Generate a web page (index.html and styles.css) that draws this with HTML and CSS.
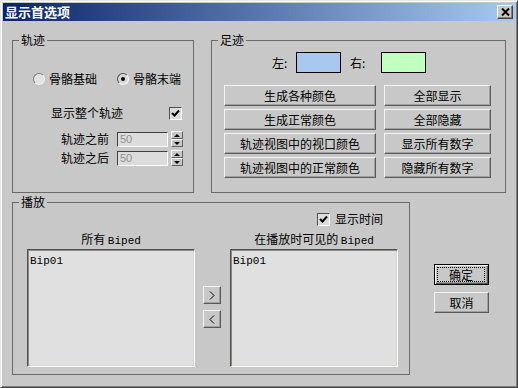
FILE: index.html
```html
<!DOCTYPE html>
<html>
  <head>
    <meta charset="utf-8">
    <title>显示首选项</title>
    <link rel="stylesheet" href="styles.css">
  </head>
  <body>
    <div class="window">
      <div class="titlebar">
        <span class="title">显示首选项</span>
        <span class="close-btn">
          <svg width="9" height="8" viewBox="0 0 9 8">
            <path d="M1 0.5L8 7.5M8 0.5L1 7.5" stroke="#000" stroke-width="2" fill="none"/>
          </svg>
        </span>
      </div>

      <div class="content">
        <div class="top-row">
          <!-- 轨迹 -->
          <div class="group group-trail">
            <span class="legend">轨迹</span>
            <div class="radio-row">
              <span class="radio-item"><span class="radio"></span>骨骼基础</span>
              <span class="radio-item second"><span class="radio checked"></span>骨骼末端</span>
            </div>
            <div class="check-row">
              <span class="check-label">显示整个轨迹</span>
              <span class="checkbox">
                <svg width="9" height="9" viewBox="0 0 9 9"><path d="M1 4l2.5 2.5L8 1.5" stroke="#000" stroke-width="2" fill="none"/></svg>
              </span>
            </div>
            <div class="spin-row first">
              <span class="spin-label">轨迹之前</span>
              <span class="num-input">50</span>
              <span class="spinner"><span class="spin-half up"></span><span class="spin-half down"></span></span>
            </div>
            <div class="spin-row">
              <span class="spin-label">轨迹之后</span>
              <span class="num-input">50</span>
              <span class="spinner"><span class="spin-half up"></span><span class="spin-half down"></span></span>
            </div>
          </div>

          <!-- 足迹 -->
          <div class="group group-foot">
            <span class="legend">足迹</span>
            <div class="swatch-row">
              <span class="swatch-label">左:</span>
              <span class="swatch swatch-left"></span>
              <span class="swatch-label right">右:</span>
              <span class="swatch swatch-right"></span>
            </div>
            <div class="btn-grid">
              <span class="btn">生成各种颜色</span>
              <span class="btn">全部显示</span>
              <span class="btn">生成正常颜色</span>
              <span class="btn">全部隐藏</span>
              <span class="btn">轨迹视图中的视口颜色</span>
              <span class="btn">显示所有数字</span>
              <span class="btn">轨迹视图中的正常颜色</span>
              <span class="btn">隐藏所有数字</span>
            </div>
          </div>
        </div>

        <div class="bottom-row">
          <!-- 播放 -->
          <div class="group group-play">
            <span class="legend">播放</span>
            <div class="time-row">
              <span class="checkbox">
                <svg width="9" height="9" viewBox="0 0 9 9"><path d="M1 4l2.5 2.5L8 1.5" stroke="#000" stroke-width="2" fill="none"/></svg>
              </span>
              <span>显示时间</span>
            </div>
            <div class="lists">
              <div class="list-col">
                <div class="list-title">所有 <span class="mono">Biped</span></div>
                <div class="listbox"><span class="mono">Bip01</span></div>
              </div>
              <div class="arrows">
                <span class="arrow-btn">
                  <svg width="6" height="9" viewBox="0 0 6 9"><path d="M1 0.5l4 4-4 4" stroke="#000" fill="none"/></svg>
                </span>
                <span class="arrow-btn">
                  <svg width="6" height="9" viewBox="0 0 6 9"><path d="M5 0.5l-4 4 4 4" stroke="#000" fill="none"/></svg>
                </span>
              </div>
              <div class="list-col">
                <div class="list-title">在播放时可见的 <span class="mono">Biped</span></div>
                <div class="listbox"><span class="mono">Bip01</span></div>
              </div>
            </div>
          </div>

          <div class="dialog-buttons">
            <span class="btn dlg-btn default"><span class="focus">确定</span></span>
            <span class="btn dlg-btn">取消</span>
          </div>
        </div>
      </div>
    </div>
  </body>
</html>
```

FILE: styles.css
```css
* {
  box-sizing: border-box;
}
html,
body {
  margin: 0;
}
body {
  width: 518px;
  height: 388px;
  font-family: "Noto Sans CJK SC", sans-serif;
  font-size: 12px;
  line-height: 16px;
  color: #000;
  background: #c8c8c8;
}
.mono {
  font-family: "Liberation Mono", monospace;
  font-size: 11px;
}

/* window frame */
.window {
  width: 518px;
  height: 388px;
  background: #c8c8c8;
  border: 1px solid;
  border-color: #e8e8e8 #404040 #404040 #e8e8e8;
  box-shadow: inset 1px 1px #ffffff, inset -1px -1px #808080;
  padding: 2px;
  display: flex;
  flex-direction: column;
}
.titlebar {
  height: 18px;
  display: flex;
  align-items: center;
  padding: 0 2px 0 2px;
  background: linear-gradient(to right, #0a246a, #a6caf0);
}
.title {
  color: #fff;
  font-weight: bold;
  font-size: 13px;
}
.close-btn {
  margin-left: auto;
  width: 16px;
  height: 14px;
  background: #c8c8c8;
  border: 1px solid;
  border-color: #ffffff #404040 #404040 #ffffff;
  box-shadow: inset -1px -1px #808080;
  display: flex;
  align-items: center;
  justify-content: center;
}

.content {
  padding: 19px 0 0 9px;
}
.top-row {
  display: flex;
  gap: 17px;
}
.bottom-row {
  display: flex;
  margin-top: 9px;
}

/* group boxes */
.group {
  position: relative;
  border: 1px solid #6a6a6a;
}
.legend {
  position: absolute;
  top: -9px;
  left: 6px;
  padding: 0 2px;
  background: #c8c8c8;
}
.group-trail {
  width: 182px;
  height: 153px;
}
.group-foot {
  width: 295px;
  height: 153px;
}
.group-play {
  width: 398px;
  height: 173px;
}

/* 轨迹 */
.radio-row {
  display: flex;
  align-items: center;
  height: 16px;
  margin-top: 30px;
  padding-left: 20px;
}
.radio-item {
  display: flex;
  align-items: center;
  gap: 4px;
}
.radio-item.second {
  margin-left: 20px;
}
.radio {
  width: 12px;
  height: 12px;
  border-radius: 50%;
  border: 1px solid;
  border-color: #808080 #f0f0f0 #f0f0f0 #808080;
  background: #e4e4e4;
  display: flex;
  align-items: center;
  justify-content: center;
}
.radio.checked {
  border-color: #505050 #ffffff #ffffff #505050;
  background: #d8d8d8;
}
.radio.checked::after {
  content: "";
  width: 4px;
  height: 4px;
  border-radius: 50%;
  background: #000;
}
.check-row {
  display: flex;
  align-items: center;
  height: 16px;
  margin-top: 18px;
  padding-left: 38px;
}
.check-row .checkbox {
  margin-left: 46px;
}
.checkbox {
  width: 13px;
  height: 13px;
  border: 1px solid;
  border-color: #505050 #ffffff #ffffff #505050;
  background: #dcdcdc;
  display: flex;
  align-items: center;
  justify-content: center;
}
.spin-row {
  display: flex;
  align-items: center;
  height: 16px;
  margin-top: 3px;
  padding-left: 48px;
}
.spin-row.first {
  margin-top: 10px;
}
.spin-label {
  width: 48px;
  margin-right: 8px;
}
.num-input {
  width: 51px;
  height: 15px;
  border: 1px solid;
  border-color: #404040 #ffffff #ffffff #404040;
  background: #dcdcdc;
  color: #909090;
  font-family: "Liberation Sans", sans-serif;
  font-size: 11px;
  line-height: 13px;
  padding-left: 2px;
}
.spinner {
  width: 12px;
  height: 16px;
  margin-left: 3px;
  display: flex;
  flex-direction: column;
}
.spin-half {
  flex: 1;
  border: 1px solid;
  border-color: #ffffff #606060 #606060 #ffffff;
  background: #c8c8c8;
  display: flex;
  align-items: center;
  justify-content: center;
}
.spin-half.up::after {
  content: "";
  border-left: 3px solid transparent;
  border-right: 3px solid transparent;
  border-bottom: 3px solid #000;
}
.spin-half.down::after {
  content: "";
  border-left: 3px solid transparent;
  border-right: 3px solid transparent;
  border-top: 3px solid #000;
}

/* 足迹 */
.swatch-row {
  display: flex;
  align-items: center;
  height: 21px;
  margin-top: 11px;
  padding-left: 60px;
}
.swatch-label {
  width: 24px;
}
.swatch-label.right {
  width: 31px;
  margin-left: 9px;
}
.swatch {
  width: 45px;
  height: 21px;
  border: 1px solid #000;
}
.swatch-left {
  background: #a8c8f0;
}
.swatch-right {
  background: #c0ffc0;
}
.btn-grid {
  display: grid;
  grid-template-columns: 152px 107px;
  grid-auto-rows: 21px;
  column-gap: 8px;
  row-gap: 3px;
  margin-top: 12px;
  padding-left: 12px;
}
.btn {
  height: 21px;
  background: #c8c8c8;
  border: 1px solid;
  border-color: #f4f4f4 #5a5a5a #5a5a5a #f4f4f4;
  box-shadow: inset -1px -1px #a0a0a0;
  display: flex;
  align-items: center;
  justify-content: center;
}

/* 播放 */
.time-row {
  display: flex;
  align-items: center;
  gap: 5px;
  height: 16px;
  margin-top: 8px;
  padding-left: 304px;
}
.lists {
  display: flex;
  margin-top: 4px;
  padding-left: 14px;
}
.list-col {
  width: 168px;
  display: flex;
  flex-direction: column;
}
.list-title {
  height: 16px;
  text-align: center;
}
.listbox {
  margin-top: 2px;
  height: 118px;
  background: #e0e0e0;
  border: 1px solid;
  border-color: #505050 #ffffff #ffffff #505050;
  box-shadow: inset 1px 1px #8a8a8a, inset -1px -1px #d8d8d0;
  padding: 2px 0 0 2px;
  line-height: 14px;
}
.arrows {
  width: 18px;
  margin: 0 9px 0 8px;
  padding-top: 55px;
  display: flex;
  flex-direction: column;
  gap: 6px;
}
.arrow-btn {
  width: 18px;
  height: 18px;
  border: 1px solid;
  border-color: #f4f4f4 #5a5a5a #5a5a5a #f4f4f4;
  box-shadow: inset -1px -1px #a0a0a0;
  display: flex;
  align-items: center;
  justify-content: center;
}

/* dialog buttons */
.dialog-buttons {
  margin-left: 24px;
  padding-top: 62px;
  display: flex;
  flex-direction: column;
  gap: 7px;
}
.dlg-btn {
  width: 55px;
  height: 21px;
}
.dlg-btn.default {
  border: 1px solid #000;
  box-shadow: inset 1px 1px #f4f4f4, inset -1px -1px #5a5a5a, inset -2px -2px #a0a0a0;
  padding: 2px 3px 2px 2px;
}
.focus {
  flex: 1;
  align-self: stretch;
  border: 1px dotted #000;
  display: flex;
  align-items: center;
  justify-content: center;
  line-height: 13px;
}
```
